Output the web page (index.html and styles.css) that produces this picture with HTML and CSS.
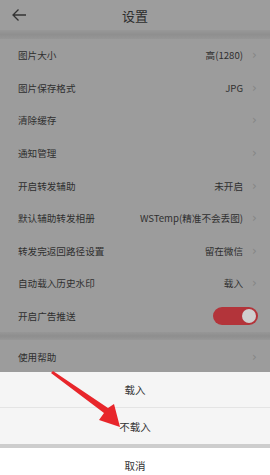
FILE: index.html
```html
<!DOCTYPE html>
<html>
<head>
<meta charset="utf-8">
<link rel="stylesheet" href="styles.css">
</head>
<body>
<div class="page">
  <div class="header">
    <svg class="back" width="16" height="14" viewBox="0 0 16 14"><path d="M15 7H2M7.5 1.5L2 7l5.5 5.5" fill="none" stroke="#333" stroke-width="1.3"/></svg>
    <div class="title">设置</div>
  </div>
  <div class="band"></div>
  <div class="list">
    <div class="row"><span class="label">图片大小</span><span class="value">高(1280)</span><span class="chev">›</span></div>
    <div class="row"><span class="label">图片保存格式</span><span class="value">JPG</span><span class="chev">›</span></div>
    <div class="row"><span class="label">清除缓存</span><span class="value"></span><span class="chev">›</span></div>
    <div class="row"><span class="label">通知管理</span><span class="value"></span><span class="chev">›</span></div>
    <div class="row"><span class="label">开启转发辅助</span><span class="value">未开启</span><span class="chev">›</span></div>
    <div class="row"><span class="label">默认辅助转发相册</span><span class="value">WSTemp(精准不会丢图)</span><span class="chev">›</span></div>
    <div class="row"><span class="label">转发完返回路径设置</span><span class="value">留在微信</span><span class="chev">›</span></div>
    <div class="row"><span class="label">自动载入历史水印</span><span class="value">载入</span><span class="chev">›</span></div>
    <div class="row"><span class="label">开启广告推送</span><span class="toggle"><span class="knob"></span></span></div>
  </div>
  <div class="gap"></div>
  <div class="list">
    <div class="row"><span class="label">使用帮助</span><span class="value"></span><span class="chev">›</span></div>
  </div>
  <div class="sheet">
    <div class="opt">载入</div>
    <div class="opt">不载入</div>
    <div class="sep"></div>
    <div class="opt cancel">取消</div>
  </div>
  <svg class="arrow" width="270" height="475" viewBox="0 0 270 475"><polygon points="51,373 104,413 99,420 120,427 114,404 108,408 53,371" fill="#e8262b"/></svg>
</div>
</body>
</html>
```
FILE: styles.css
```css
* { box-sizing: border-box; margin: 0; padding: 0; }
html, body { width: 270px; height: 475px; overflow: hidden; }
body { font-family: "Noto Sans CJK SC", "Noto Sans", sans-serif; background: #9c9c9c; color: #2f2f2f; }
.page { position: relative; width: 270px; height: 475px; overflow: hidden; background: #9c9c9c; }
.header { height: 30px; display: flex; align-items: center; justify-content: center; position: relative; background: #9d9d9d; }
.back { position: absolute; left: 11px; top: 8px; }
.title { font-size: 13px; color: #2c2c2c; }
.band { height: 9px; background: linear-gradient(#989898, #8f8f8f 50%, #969696); }
.list { background: #9c9c9c; }
.row { height: 32.6px; display: flex; align-items: center; padding: 0 12px 0 18px; font-size: 9.6px; }
.label { flex: 1; color: #2f2f2f; }
.value { color: #2f2f2f; margin-right: 9px; }
.chev { color: #858585; font-size: 12px; font-family: "DejaVu Sans", sans-serif; line-height: 1; width: 6px; }
.toggle { width: 45px; height: 18px; border-radius: 9px; background: #b3343a; display: flex; align-items: center; justify-content: flex-end; padding-right: 2px; }
.knob { width: 14px; height: 14px; border-radius: 50%; background: #cfcfcf; }
.gap { height: 8px; background: linear-gradient(#979797, #8e8e8e 50%, #979797); }
.sheet { position: absolute; left: 0; top: 372px; width: 270px; background: #f4f4f4; }
.opt { height: 36px; display: flex; align-items: center; justify-content: center; font-size: 10.5px; color: #333; background: #f5f5f5; border-bottom: 1px solid #e4e4e4; }
.opt:nth-child(2) { border-bottom: none; height: 36px; }
.sep { height: 4px; background: #cdcdcd; }
.cancel { background: #fff; height: 34px; border-bottom: none; }
.arrow { position: absolute; left: 0; top: 0; }
```
